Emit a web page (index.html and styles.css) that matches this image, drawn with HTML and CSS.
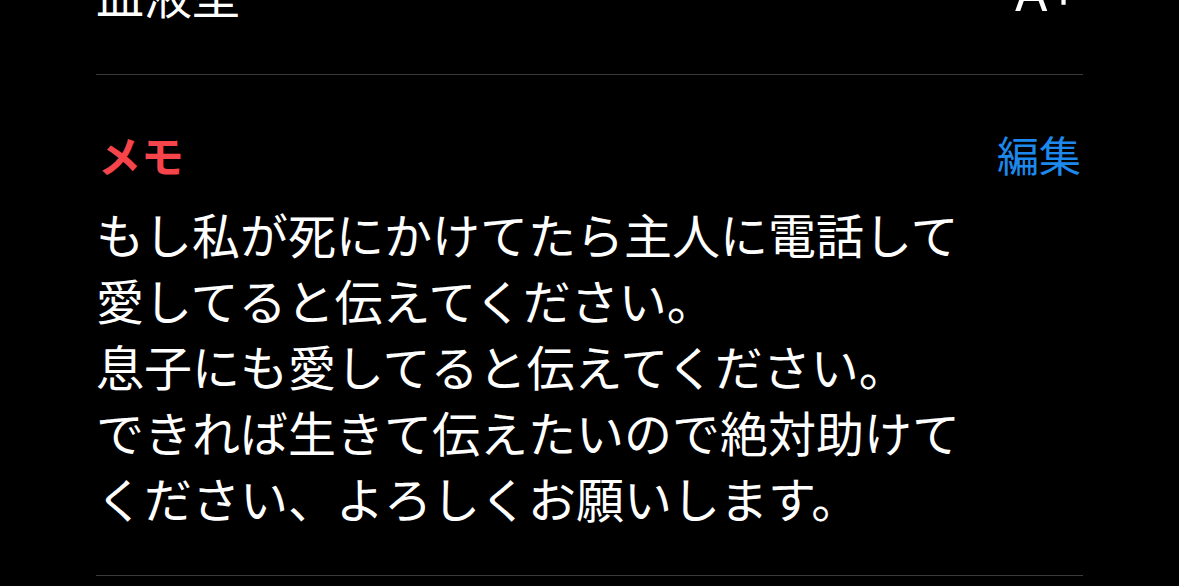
FILE: index.html
```html
<!DOCTYPE html>
<html lang="ja">
<head>
<meta charset="utf-8">
<link rel="stylesheet" href="styles.css">
</head>
<body>
<div class="page">
  <div class="row top-row">
    <span class="row-label">血液型</span>
    <span class="row-value">A+</span>
  </div>
  <section class="memo">
    <div class="memo-header">
      <span class="memo-title">メモ</span>
      <span class="memo-edit">編集</span>
    </div>
    <div class="memo-body">
      <div>もし私が死にかけてたら主人に電話して</div>
      <div>愛してると伝えてください。</div>
      <div>息子にも愛してると伝えてください。</div>
      <div>できれば生きて伝えたいので絶対助けて</div>
      <div>ください、よろしくお願いします。</div>
    </div>
  </section>
</div>
</body>
</html>
```

FILE: styles.css
```css
html, body {
  margin: 0;
  padding: 0;
  background: #000;
  overflow: hidden;
}
body {
  font-family: "Noto Sans CJK JP", "Noto Sans", sans-serif;
  color: #fff;
}
.page {
  padding: 0 96px;
}
.row {
  display: flex;
  justify-content: space-between;
  font-size: 48px;
  line-height: 66px;
}
.top-row {
  margin-top: -40px;
  padding-bottom: 48px;
  border-bottom: 1px solid #3a3a3c;
}
.row-value {
  padding-right: 3px;
  font-family: "Inter", "Noto Sans", sans-serif;
  font-size: 50px;
  font-weight: 400;
}
.memo {
  padding-top: 51px;
  padding-bottom: 45px;
  border-bottom: 1px solid #3a3a3c;
}
.memo-header {
  display: flex;
  justify-content: space-between;
  font-size: 42px;
  line-height: 56px;
}
.memo-title {
  color: #f5444a;
  font-weight: 700;
  font-size: 43px;
  padding-left: 2px;
}
.memo-edit {
  color: #1d89ec;
  padding-right: 2px;
}
.memo-body {
  margin-top: 18px;
  font-size: 48px;
  line-height: 66px;
  white-space: nowrap;
}
```
